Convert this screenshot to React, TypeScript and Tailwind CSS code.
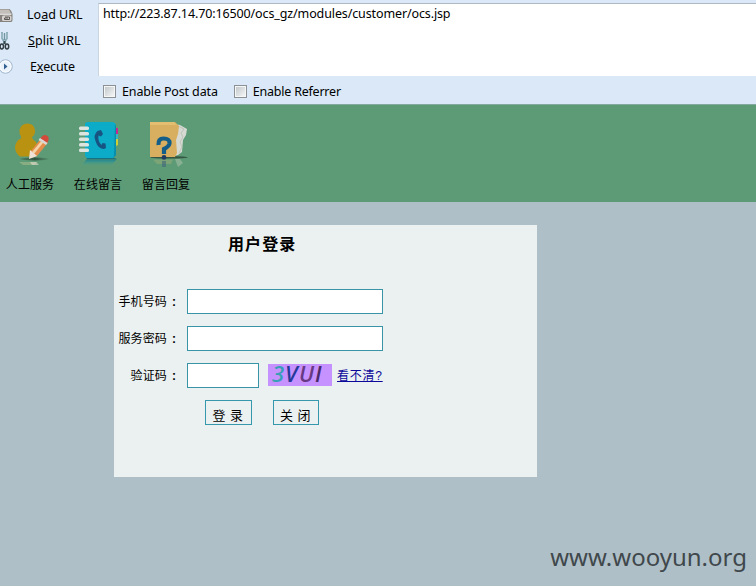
import type { ReactNode } from 'react';

const latin = "font-['Noto_Sans','Noto_Sans_CJK_SC',sans-serif]";
const cjk = "font-['Liberation_Sans','Noto_Sans_CJK_SC',sans-serif]";

function DriveIcon() {
  return (
    <svg width="14" height="16" viewBox="0 0 14 16" className="block">
      <path d="M0 2H9.5Q12 4 12.5 7V13Q12.500 15 11 15H0Z" fill="#85827f" />
      <path d="M0 2.500H9L11 6.500H0Z" fill="#c4bfba" />
      <path d="M0 6.500H11.500V7.800H0Z" fill="#f1efed" />
      <rect x="2" y="8.500" width="9.500" height="5.500" rx="1.500" fill="#d5d2cf" />
      <path d="M5 10H9.500V12.500H4.500V11H8" fill="none" stroke="#5d5957" strokeWidth="1" />
    </svg>
  );
}

function ScissorsIcon() {
  return (
    <svg width="11" height="19" viewBox="0 0 11 19" className="block" fill="none">
      <path d="M2 0V6.500L5.500 12M7 0V6.500L3.500 12M4.500 1V8" stroke="#6f96a2" strokeWidth="1.400" />
      <path d="M2 1V7L4.500 10.500M7 1V7L4.500 10.500" stroke="#b6d2db" strokeWidth=".5" />
      <path d="M4.500 9V12" stroke="#39464b" strokeWidth="2" />
      <ellipse cx="1.800" cy="14.500" rx="1.700" ry="2.400" stroke="#343e43" strokeWidth="1.500" />
      <ellipse cx="7" cy="14.500" rx="1.700" ry="2.400" stroke="#343e43" strokeWidth="1.500" />
    </svg>
  );
}

function PlayIcon() {
  return (
    <svg width="14" height="16" viewBox="0 0 14 16" className="block">
      <circle cx="5.500" cy="7.500" r="6.700" fill="#e9f2fb" stroke="#9db3cb" />
      <circle cx="5.500" cy="7.500" r="5.500" fill="none" stroke="#fff" />
      <path d="M4 4.500L7.500 7.500L4 10.500Z" fill="#315f8f" />
    </svg>
  );
}

function PersonIcon() {
  return (
    <svg width="48" height="48" viewBox="0 0 48 48" className="block">
      <defs>
        <linearGradient id="personShadow">
          <stop offset="0" stopColor="#33533f" stopOpacity=".3" />
          <stop offset=".5" stopColor="#33533f" />
          <stop offset="1" stopColor="#33533f" stopOpacity="0" />
        </linearGradient>
      </defs>
      <ellipse cx="29" cy="38" rx="15" ry="1.500" fill="url(#personShadow)" />
      <path d="M15 15Q13 13 13.500 9Q15 2.500 21.500 2.500Q28 2.500 29 9Q29.500 14 26 16Q26 18 30 21L32 27L26 35.500H14Q9 32 9 26Q10 19 15 17.500Z" fill="#b99212" />
      <path d="M35.500 17L42 21.500L31 35L24 37L24 31Z" fill="#e58e4c" />
      <path d="M26 31L37 18L39 19.500L28 33Z" fill="#f3d3a7" />
      <path d="M34 17.500L37 14.500Q40 13 42.500 16Q43.500 19 41 22Z" fill="#d34a3a" />
      <path d="M34 17L41.500 22L40 24L32.500 19Z" fill="#d9d8d4" />
      <path d="M24 29L31 35L23 38Z" fill="#f1e2d7" />
      <path d="M13 41H32L28 44H17Z" fill="#b6bf8f" opacity=".5" />
      <path d="M24 41H30L33 44H26Z" fill="#ded9c8" opacity=".65" />
    </svg>
  );
}

function PhoneBookIcon() {
  return (
    <svg width="48" height="48" viewBox="0 0 48 48" className="block">
      <defs>
        <linearGradient id="bookReflection" x2="0" y2="1">
          <stop stopColor="#168399" stopOpacity=".8" />
          <stop offset="1" stopColor="#44a597" stopOpacity="0" />
        </linearGradient>
      </defs>
      <path d="M40 7H44V13H40Z" fill="#c82692" />
      <path d="M40 13H44V18H40Z" fill="#35b6c0" />
      <path d="M40 18H44V24L40 26Z" fill="#cdcf35" />
      <path d="M11 3Q11 1 14 1H39Q42 2 42 5V34L39 37H14Q11 37 11 34Z" fill="#0cabc8" />
      <path d="M41 3L42 5V34L39 37L40 34Z" fill="#078eac" />
      <g fill="#dce4df">
        <rect x="5" y="5.500" width="10" height="3.500" rx="1.500" />
        <rect x="5" y="11" width="10" height="3.500" rx="1.500" />
        <rect x="5" y="16.500" width="10" height="3.500" rx="1.500" />
        <rect x="5" y="22" width="10" height="3.500" rx="1.500" />
        <rect x="5" y="27.500" width="10" height="3.500" rx="1.500" />
      </g>
      <path d="M27 9L23.500 10Q19 14 21.500 20Q24 28 30 28L32 27L31.500 22.500L28.500 22L27.500 24Q23.500 20 24.500 14.500L27 15.500L29 13Z" fill="#175482" />
      <path d="M13 37H41L43 38.500H12Z" fill="#197080" />
      <path d="M12 39H42L37 45H7Z" fill="url(#bookReflection)" />
    </svg>
  );
}

function FolderIcon() {
  return (
    <svg width="48" height="48" viewBox="0 0 48 48" className="block">
      <ellipse cx="27" cy="36.300" rx="19" ry="1.200" fill="#345541" />
      <path d="M32 3L38 4L45 8L44 14L41 19L40 31L36 34L32 35Z" fill="#d7d9d3" />
      <path d="M36 5L42 8L39 12L41 16L38 21L40 26L37 32" fill="none" stroke="#b8beb4" strokeWidth=".8" />
      <path d="M8 1H33L37 5L36 13L34 19L35 32L33 36H8Z" fill="#d8af60" />
      <path d="M8 1H32L35 4H8Z" fill="#e3bd70" />
      <path d="M16.500 24Q16 17.500 21.500 17.500Q28 17.500 27.500 22.500Q27 25.500 22 28V33" fill="none" stroke="#125e89" strokeWidth="4.200" />
      <circle cx="22" cy="36.500" r="2.400" fill="#203b62" />
      <path d="M11 38.500H31L29 43H15Z" fill="#b6b577" opacity=".35" />
      <path d="M22 40V46" stroke="#42657c" strokeWidth="4" opacity=".6" />
      <path d="M33 38H38L41 42L36 46Z" fill="#c9d0bd" opacity=".4" />
    </svg>
  );
}

function CheckOption({ children }: { children: ReactNode }) {
  return (
    <label className="flex items-center gap-[6px]">
      <span className="size-[13px] border border-[#8d9094] bg-linear-to-br from-[#bfc4c8] to-[#f9fafa] shadow-[inset_0_0_0_1px_#f5f6f6]" />
      <span className="mt-px -mb-px">{children}</span>
    </label>
  );
}

function Shortcut({ icon, label }: { icon: ReactNode; label: string }) {
  return (
    <div className="flex w-[68px] flex-col items-center pt-4">
      {icon}
      <span className="mt-[7px] whitespace-nowrap text-[12px] leading-[18px] tracking-[.1px]">{label}</span>
    </div>
  );
}

function FieldLabel({ text }: { text: string }) {
  return (
    <label className="flex w-[73px] justify-end pr-[7px] text-[12px] leading-[18px]">
      <span className="tracking-[.15px]">{text}</span>
      <span className="w-[13px] pl-[5px] font-bold font-['Liberation_Sans',sans-serif]">:</span>
    </label>
  );
}

function Field({ label }: { label: string }) {
  return (
    <div className="flex h-[25px] items-center">
      <FieldLabel text={label} />
      <input aria-label={label} className="h-[25px] w-[196px] border border-[#3a94a8] bg-white outline-none" />
    </div>
  );
}

export default function App() {
  return (
    <main className={`flex h-[586px] w-[756px] flex-col overflow-hidden bg-[#afbfc7] text-black ${cjk}`}>
      <header className={`flex h-[104px] shrink-0 bg-[#dae8f7] text-[12.5px] ${latin}`}>
        <nav className="w-[98px] pt-[2px]">
          <div className="flex h-[26px] items-center"><span className="w-[27px]"><DriveIcon /></span><span>Lo<u>a</u>d URL</span></div>
          <div className="flex h-[26px] items-center"><span className="w-[28px]"><ScissorsIcon /></span><span className="tracking-[.05px]"><u>S</u>plit URL</span></div>
          <div className="flex h-[26px] items-center"><span className="w-[30px]"><PlayIcon /></span><span className="tracking-[-.1px]">E<u>x</u>ecute</span></div>
        </nav>
        <section className="flex flex-1 flex-col pt-[3px]">
          <div className="h-[73px] border-l border-t border-l-[#cbd5df] border-t-[#aeb8c1] bg-white pl-[4px] pt-px leading-[18px] tracking-[-.12px]">http://223.87.14.70:16500/ocs_gz/modules/customer/ocs.jsp</div>
          <div className="flex h-[28px] items-center gap-[16px] pl-[5px] pt-[3px] tracking-[-.14px]">
            <CheckOption>Enable Post data</CheckOption>
            <CheckOption><span className="tracking-[-.22px]">Enable Referrer</span></CheckOption>
          </div>
        </section>
      </header>

      <nav className="flex h-[98px] shrink-0 border-t border-[#82a99b] bg-[#5d9b76]">
        <div className="-ml-[4px] flex">
          <Shortcut icon={<PersonIcon />} label="人工服务" />
          <Shortcut icon={<PhoneBookIcon />} label="在线留言" />
          <Shortcut icon={<FolderIcon />} label="留言回复" />
        </div>
      </nav>

      <section className="flex flex-1 flex-col pl-[114px] pt-[23px]">
        <form className="h-[252px] w-[423px] bg-[#ebf1f1] pt-[8px]">
          <h1 className="pl-[114px] text-[16px] font-bold leading-[24px] tracking-[1.1px]">用户登录</h1>
          <div className="mt-[32px] flex flex-col gap-[12px]">
            <Field label="手机号码" />
            <Field label="服务密码" />
            <div className="flex h-[25px] items-center">
              <FieldLabel text="验证码" />
              <input aria-label="验证码" className="h-[25px] w-[72px] border border-[#3a94a8] bg-white outline-none" />
              <div className="mb-px ml-[9px] flex h-[22px] w-[64px] items-center bg-[#c692ff] pb-[4px] pl-[4px] font-['Open_Sans',sans-serif] text-[22px] font-semibold italic leading-[22px]">
                <span className="w-[13px] text-[#389fb7]">3</span><span className="w-[14px] text-[#263a9a]">V</span><span className="w-[16px] text-[#673983]">U</span><span className="text-[#4a2a68]">I</span>
              </div>
              <a href="#" className="ml-[5px] mt-px whitespace-nowrap text-[12px] leading-[18px] tracking-[.75px] text-[#0b089a] underline">看不清?</a>
            </div>
          </div>
          <div className="mt-[12px] flex gap-[21px] pl-[91px] text-[13px]">
            <button type="button" className="h-[25px] w-[47px] whitespace-nowrap border border-[#3598ad] pr-px pt-[7px] leading-[16px] tracking-[.4px]">登 录</button>
            <button type="button" className="h-[25px] w-[46px] whitespace-nowrap border border-[#3598ad] pr-px pt-[7px] leading-[16px] tracking-[.4px]">关 闭</button>
          </div>
        </form>
        <footer className={`mt-auto self-end pb-[13px] pr-[9px] text-[24px] leading-[32px] text-[#40484c] ${latin}`}>www.wooyun.org</footer>
      </section>
    </main>
  );
}
